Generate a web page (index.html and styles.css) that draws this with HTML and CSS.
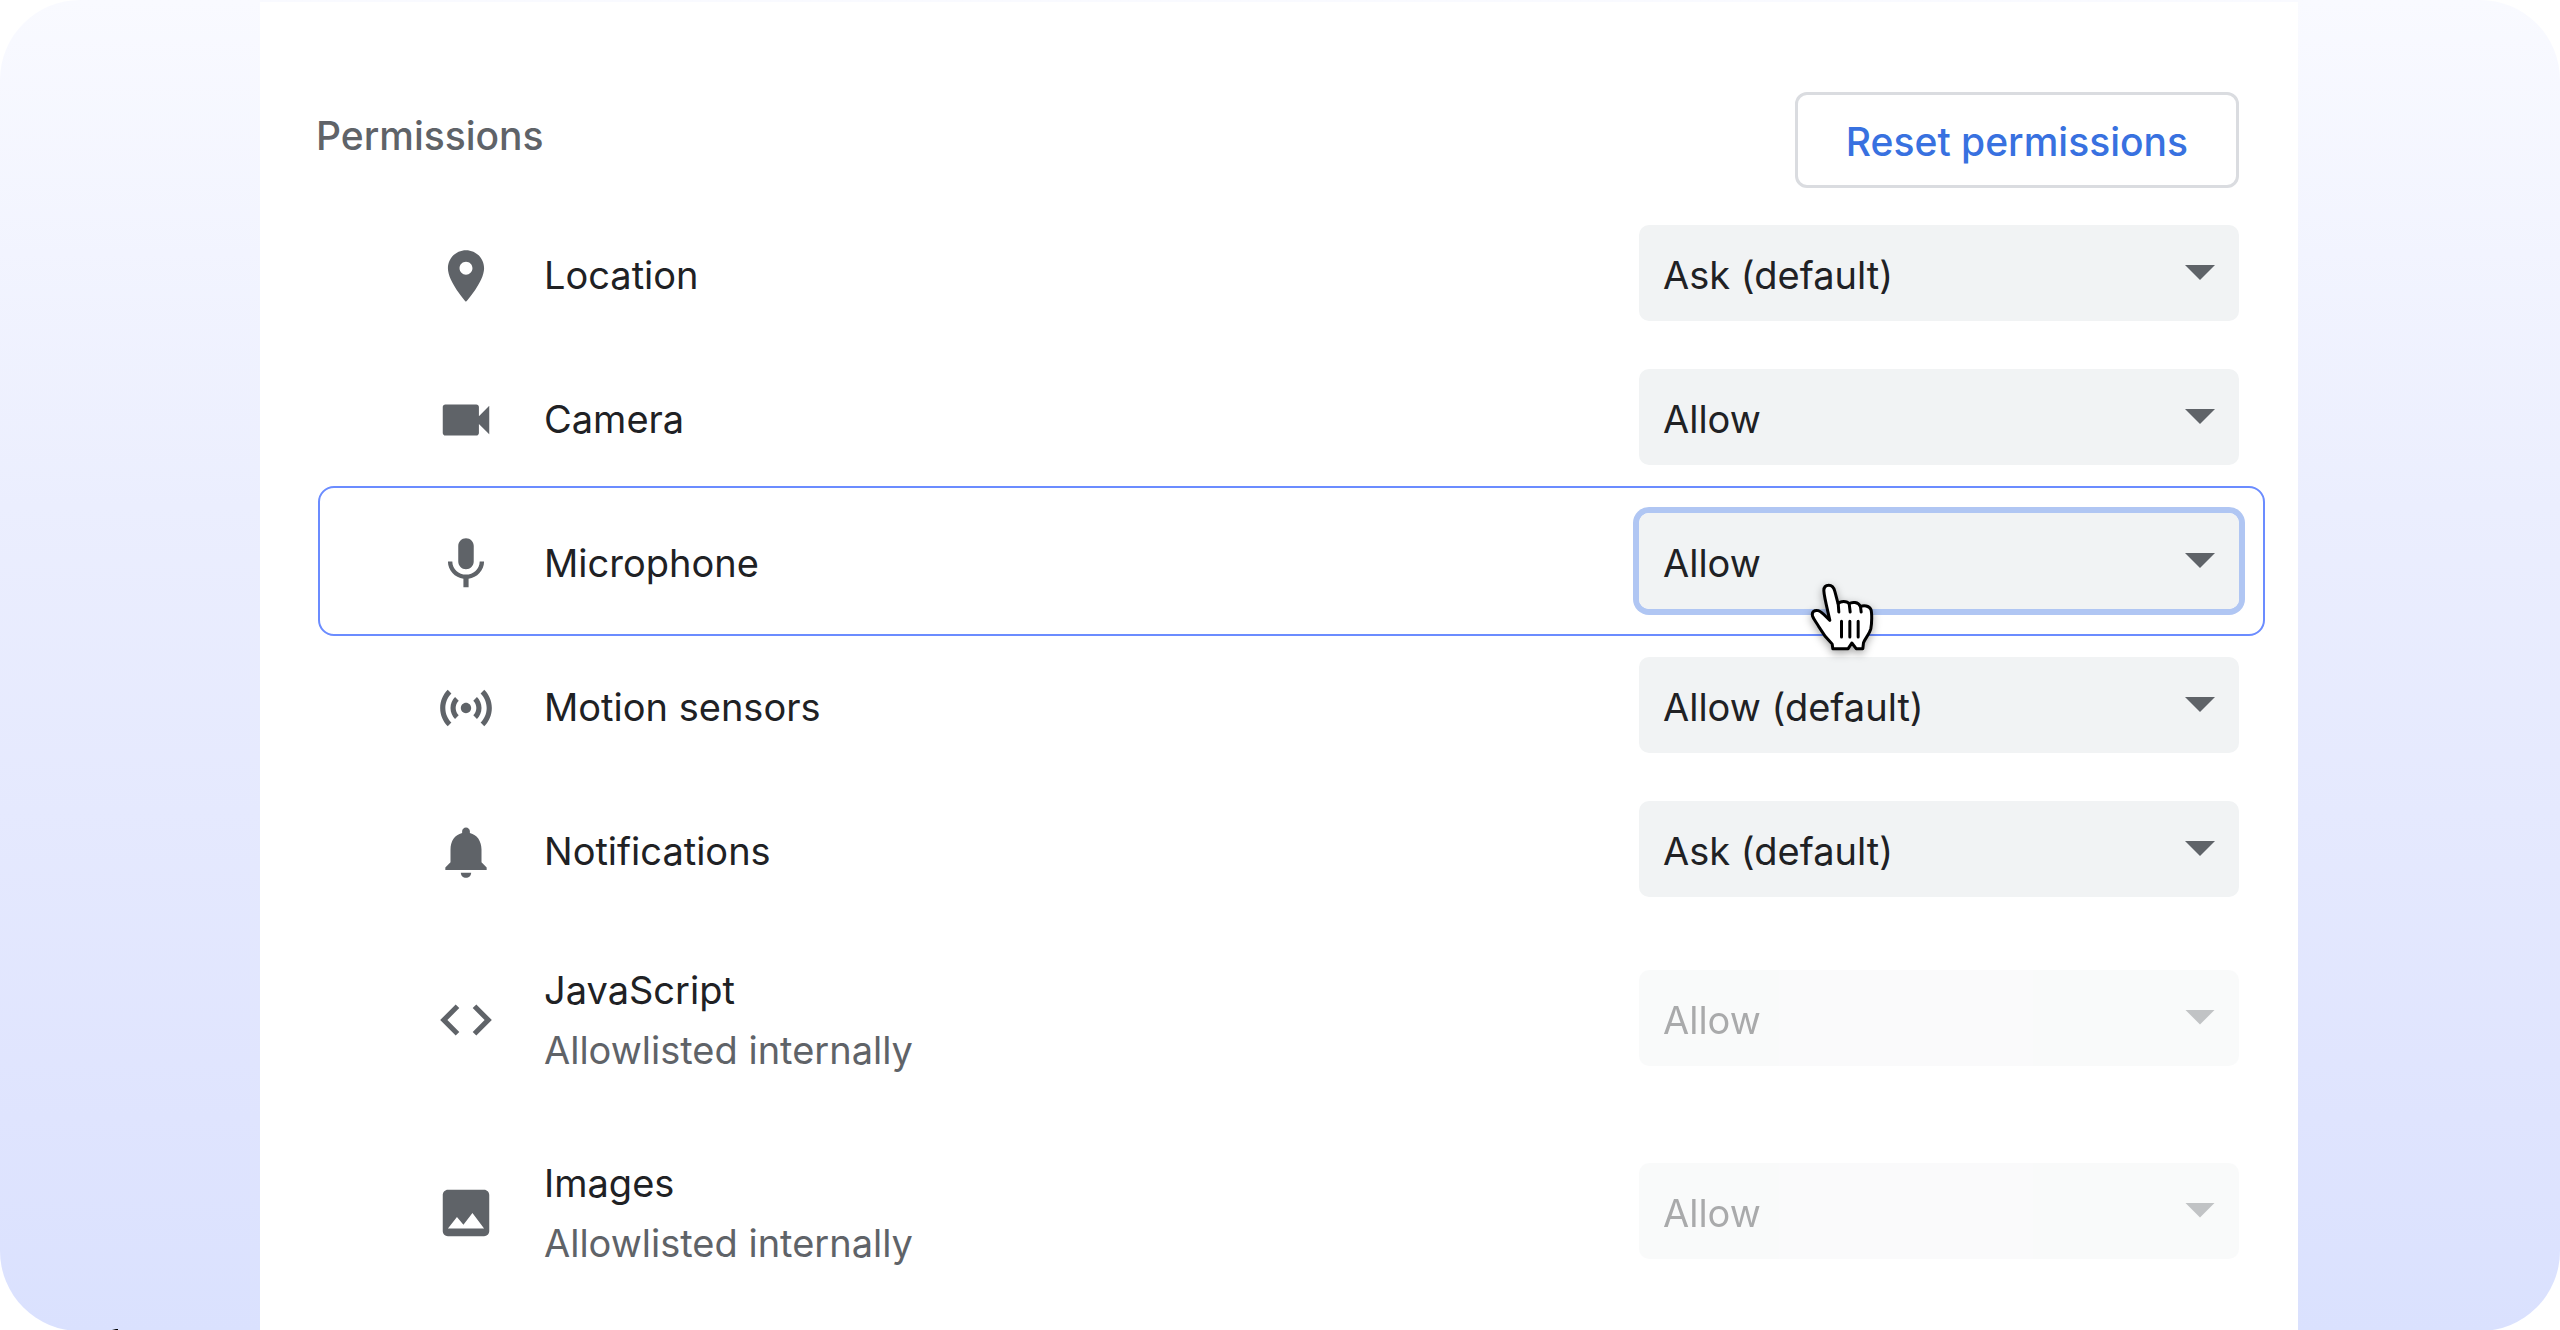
FILE: index.html
```html
<!DOCTYPE html>
<html lang="en">
<head>
<meta charset="utf-8">
<title>Site permissions</title>
<meta name="viewport" content="width=device-width, initial-scale=1">
<link rel="stylesheet" href="styles.css">
</head>
<body>
<div class="stage">
  <main class="panel">
    <header class="panel-header">
      <h1 class="panel-title">Permissions</h1>
      <button class="reset-button" type="button">Reset permissions</button>
    </header>
    <ul class="permission-list">
      <li class="permission">
        <svg class="permission-icon" viewBox="0 0 24 24" aria-hidden="true"><path d="M12 2C8.13 2 5 5.13 5 9c0 5.25 7 13 7 13s7-7.75 7-13c0-3.87-3.13-7-7-7zm0 9.5c-1.38 0-2.5-1.12-2.5-2.5s1.12-2.5 2.5-2.5 2.5 1.12 2.5 2.5-1.12 2.5-2.5 2.5z"/></svg>
        <label class="permission-text" for="location">Location</label>
        <div class="picker">
          <select class="picker-select" id="location"><option>Ask (default)</option><option>Allow</option><option>Block</option></select>
        </div>
      </li>
      <li class="permission">
        <svg class="permission-icon" viewBox="0 0 24 24" aria-hidden="true"><path d="M17 10.5V7c0-.55-.45-1-1-1H4c-.55 0-1 .45-1 1v10c0 .55.45 1 1 1h12c.55 0 1-.45 1-1v-3.5l4 4v-11l-4 4z"/></svg>
        <label class="permission-text" for="camera">Camera</label>
        <div class="picker">
          <select class="picker-select" id="camera"><option>Allow</option><option>Ask (default)</option><option>Block</option></select>
        </div>
      </li>
      <li class="permission permission-active">
        <svg class="permission-icon" viewBox="0 0 24 24" aria-hidden="true"><path d="M12 14c1.66 0 2.99-1.34 2.99-3L15 5c0-1.66-1.34-3-3-3S9 3.34 9 5v6c0 1.66 1.34 3 3 3zm5.3-3c0 3-2.54 5.1-5.3 5.1S6.7 14 6.7 11H5c0 3.41 2.72 6.23 6 6.72V21h2v-3.28c3.28-.48 6-3.3 6-6.72h-1.7z"/></svg>
        <label class="permission-text" for="microphone">Microphone</label>
        <div class="picker">
          <select class="picker-select" id="microphone"><option>Allow</option><option>Ask (default)</option><option>Block</option></select>
          <svg class="cursor" viewBox="85 65 200 210" aria-hidden="true"><path d="M156 265L154 251C140 238 125 219 115 201C109 189 98 177 95 167C92 155 101 148 112 151C125 155 133 168 147 180C143 160 130 112 129 91C129 79 136 75 144 75C155 75 159 82 162 93C167 111 169 121 172 130C178 121 199 121 205 130C213 124 233 124 239 139C248 134 265 136 270 147C274 157 273 190 270 205C266 221 253 234 248 247L246 265H226L213 248L202 265Z"/><path d="M172 128L174 155M205 130L208 155M239 139L241 155M182 183V230M207 183V230M232 183V230"/></svg>
        </div>
      </li>
      <li class="permission">
        <svg class="permission-icon" viewBox="0 0 24 24" aria-hidden="true"><path d="M7.76 16.24C6.67 15.16 6 13.66 6 12s.67-3.16 1.76-4.24l1.42 1.42C8.45 9.9 8 10.9 8 12c0 1.1.45 2.1 1.17 2.83l-1.41 1.41zm8.48 0C17.33 15.16 18 13.66 18 12s-.67-3.16-1.76-4.24l-1.42 1.42C15.55 9.9 16 10.9 16 12c0 1.1-.45 2.1-1.17 2.83l1.41 1.41zM12 10c-1.1 0-2 .9-2 2s.9 2 2 2 2-.9 2-2-.9-2-2-2zm8 2c0 2.21-.9 4.21-2.35 5.65l1.42 1.42C20.88 17.26 22 14.76 22 12s-1.12-5.26-2.93-7.07l-1.42 1.42C19.1 7.79 20 9.79 20 12zM6.35 6.35L4.93 4.93C3.12 6.74 2 9.24 2 12s1.12 5.26 2.93 7.07l1.42-1.42C4.9 16.21 4 14.21 4 12s.9-4.21 2.35-5.65z"/></svg>
        <label class="permission-text" for="motion">Motion sensors</label>
        <div class="picker">
          <select class="picker-select" id="motion"><option>Allow (default)</option><option>Block</option></select>
        </div>
      </li>
      <li class="permission">
        <svg class="permission-icon" viewBox="0 0 24 24" aria-hidden="true"><path d="M12 22c1.1 0 2-.9 2-2h-4c0 1.1.89 2 2 2zm6-6v-5c0-3.07-1.64-5.64-4.5-6.32V4c0-.83-.67-1.5-1.5-1.5s-1.5.67-1.5 1.5v.68C7.63 5.36 6 7.92 6 11v5l-2 2v1h16v-1l-2-2z"/></svg>
        <label class="permission-text" for="notifications">Notifications</label>
        <div class="picker">
          <select class="picker-select" id="notifications"><option>Ask (default)</option><option>Allow</option><option>Block</option></select>
        </div>
      </li>
      <li class="permission permission-tall">
        <svg class="permission-icon" viewBox="0 0 24 24" aria-hidden="true"><path d="M9.4 16.6L4.8 12l4.6-4.6L8 6l-6 6 6 6 1.4-1.4zm5.2 0l4.6-4.6-4.6-4.6L16 6l6 6-6 6-1.4-1.4z"/></svg>
        <label class="permission-text" for="javascript">JavaScript <span class="permission-note">Allowlisted internally</span></label>
        <div class="picker picker-disabled">
          <select class="picker-select" id="javascript" disabled><option>Allow</option></select>
        </div>
      </li>
      <li class="permission permission-tall">
        <svg class="permission-icon" viewBox="0 0 24 24" aria-hidden="true"><path d="M21 19V5c0-1.1-.9-2-2-2H5c-1.1 0-2 .9-2 2v14c0 1.1.9 2 2 2h14c1.1 0 2-.9 2-2zM8.5 13.5l2.5 3.01L14.5 12l4.5 6H5l3.5-4.5z"/></svg>
        <label class="permission-text" for="images">Images <span class="permission-note">Allowlisted internally</span></label>
        <div class="picker picker-disabled">
          <select class="picker-select" id="images" disabled><option>Allow</option></select>
        </div>
      </li>
    </ul>
  </main>
  <svg class="edge-mark" viewBox="0 0 6 2" aria-hidden="true"><path d="M0 2V1L4 0H6V2Z"/></svg>
</div>
</body>
</html>
```
FILE: styles.css
```css
* {
  box-sizing: border-box;
}

body {
  margin: 0;
  background: #fff;
  color: #202124;
  font: 400 38px/60px Inter, "Liberation Sans", sans-serif;
}

.stage {
  position: relative;
  display: flex;
  min-height: 100vh;
  padding: 2px 262px 0 260px;
  border-radius: 80px;
  background: linear-gradient(#f9faff, #ebeefe 38%, #dfe4fe 84%, #dae1fe);
}

.panel {
  flex: 1;
  min-width: 0;
  padding: 90px 33px 24px 56px;
  background: #fff;
}

.panel-header {
  display: flex;
  align-items: center;
  justify-content: space-between;
  padding-right: 26px;
}

.panel-title {
  margin: 0 0 8px;
  color: #5f6368;
  font-size: 39px;
  font-weight: 500;
}

.reset-button {
  height: 96px;
  padding: 4px 48px 0;
  border: 3px solid #dadce0;
  border-radius: 12px;
  background: #fff;
  color: #3871e0;
  font: inherit;
  font-size: 39px;
  font-weight: 500;
}

.permission-list {
  margin: 13px 0 0 2px;
  padding: 0;
  list-style: none;
}

.permission {
  display: flex;
  align-items: center;
  min-height: 144px;
  padding: 0 26px 0 117px;
}

.permission-tall {
  min-height: 193px;
}

/* The outline overlaps the neighbouring rows by 3px on each side. */
.permission-active {
  min-height: 150px;
  margin: -3px 0;
  padding: 0 24px 0 115px;
  border: 2px solid #6b8cff;
  border-radius: 16px;
}

.permission-icon {
  flex: none;
  width: 62px;
  height: 62px;
  margin-top: 5px;
  fill: #5f6368;
}

.permission-text {
  flex: 1;
  margin-left: 47px;
  padding-top: 4px;
}

.permission-note {
  display: block;
  color: #5f6368;
}

.picker {
  position: relative;
  flex: none;
  width: 600px;
  border-radius: 10px;
}

.picker::after {
  content: "";
  position: absolute;
  top: 40px;
  right: 24px;
  width: 30px;
  height: 15px;
  background: #5f6368;
  clip-path: polygon(0 0, 100% 0, 50% 100%);
  pointer-events: none;
}

.picker-select {
  display: block;
  width: 100%;
  height: 96px;
  padding: 4px 72px 0 24px;
  border: 0;
  border-radius: 10px;
  background: #f1f3f4;
  color: inherit;
  font: inherit;
  appearance: none;
}

.permission-active .picker {
  box-shadow: 0 0 0 6px #b0c6f3;
}

.picker-disabled {
  opacity: 0.38;
}

.picker-select:disabled {
  opacity: 1;
}

.cursor {
  position: absolute;
  z-index: 1;
  top: 69px;
  left: 170px;
  width: 67px;
  height: 70px;
  overflow: visible;
  fill: #fff;
  stroke: #000;
  stroke-width: 9;
  stroke-linecap: round;
  stroke-linejoin: round;
  filter: drop-shadow(0 3px 4px rgba(0, 0, 0, 0.35));
}

.edge-mark {
  position: absolute;
  bottom: 0;
  left: 112px;
  width: 6px;
  height: 2px;
}
```
